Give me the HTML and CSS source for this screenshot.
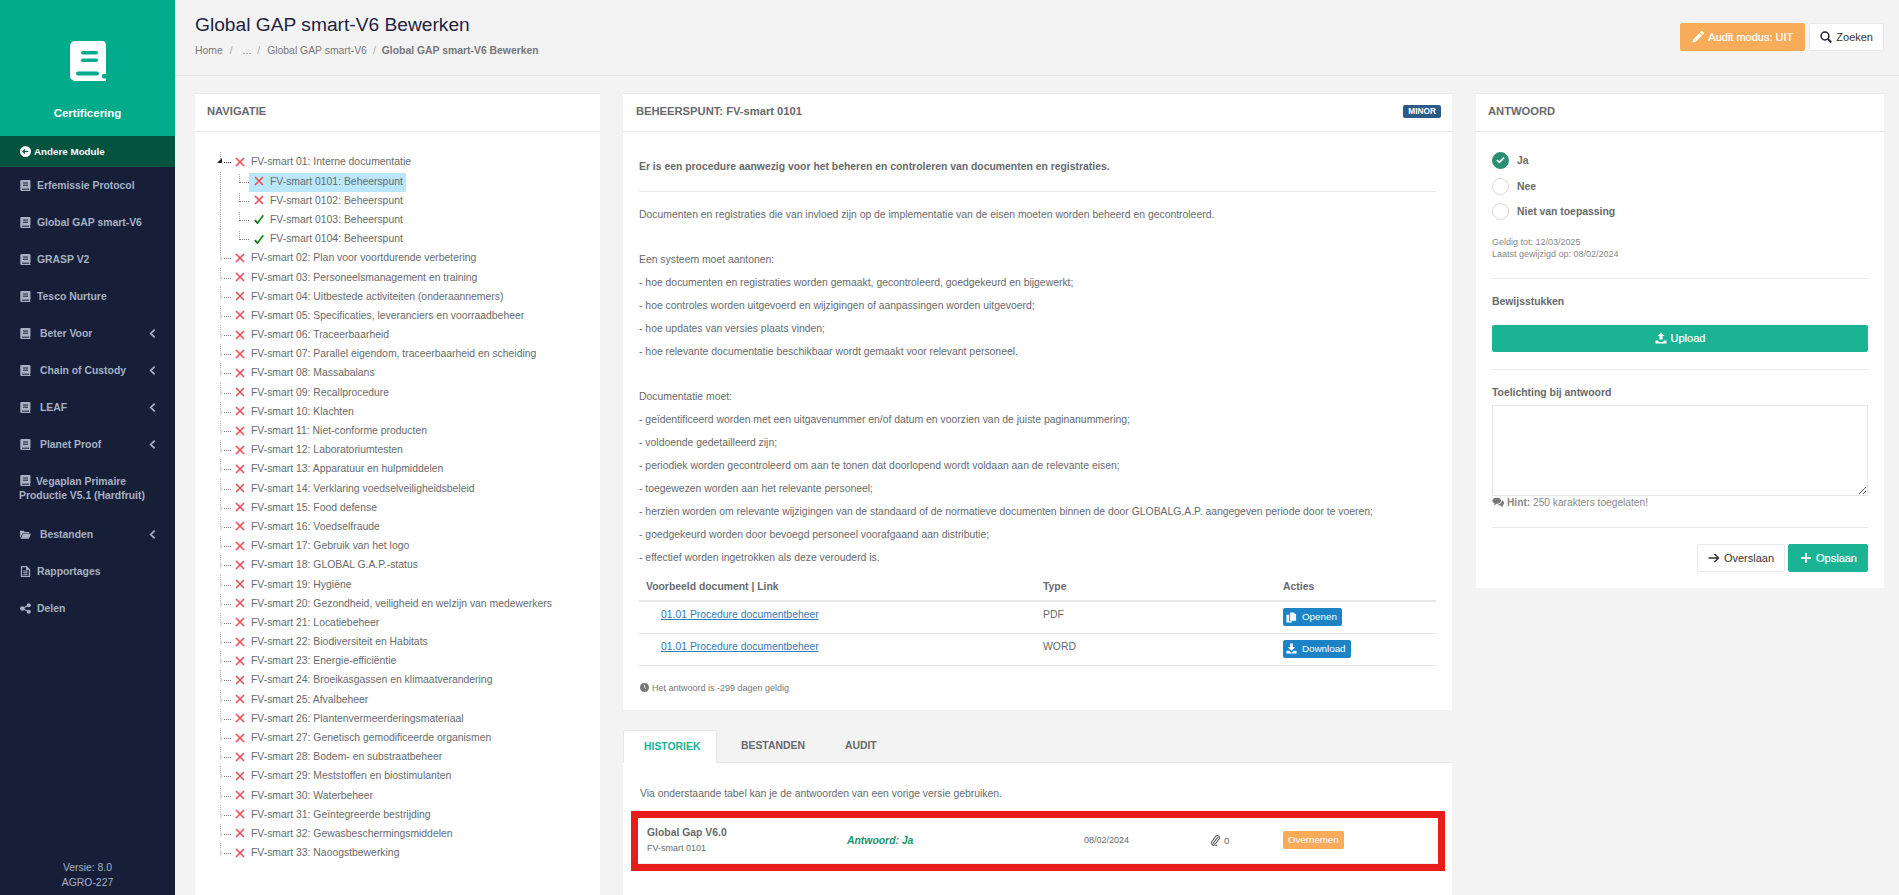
FILE: index.html
```html
<!DOCTYPE html>
<html lang="nl">
<head>
<meta charset="utf-8">
<title>Global GAP smart-V6 Bewerken</title>
<link rel="stylesheet" href="styles.css">
</head>
<body>
<svg class="defs" width="0" height="0">
<symbol id="book" viewBox="0 0 11 11"><path d="M1.500 0h8a1 1 0 0 1 1 1v7.800h-.6v1.200h.6v1H1.500A1.200 1.200 0 0 1 .3 9.800V1.200A1.200 1.200 0 0 1 1.500 0z" fill="currentColor"/><path d="M3 3h5M3 5.200h5M2 9.200h7" stroke="#161e38" stroke-width="1" fill="none"/></symbol>
<symbol id="x" viewBox="0 0 10 10"><path d="M1 1l8 8M9 1l-8 8" stroke="#ee4b57" stroke-width="1.600" fill="none"/></symbol>
<symbol id="v" viewBox="0 0 10 10"><path d="M1 6l2.600 3L9.300 1.200" stroke="#0a8a12" stroke-width="1.600" fill="none"/><path d="M.7 6.600l2.600 3" stroke="#222" stroke-width=".8" fill="none"/></symbol>
<symbol id="chev" viewBox="0 0 8 12"><path d="M6.500 1.500L2 6l4.500 4.500" stroke="currentColor" stroke-width="2" fill="none"/></symbol>
</svg>
<div class="app">
<aside class="side">
<div class="brand">
<svg class="logo" viewBox="0 0 36 40"><path d="M5 0h27a4 4 0 0 1 4 4v29h-2a2 2 0 0 0 0 4.500h2V40H5a5 5 0 0 1-5-5V5a5 5 0 0 1 5-5z" fill="#fff"/><rect x="11" y="10" width="17" height="3.500" rx="1.700" fill="#00ab8c"/><rect x="11" y="17.500" width="17" height="3.500" rx="1.700" fill="#00ab8c"/><rect x="6" y="30.500" width="23" height="4" rx="2" fill="#00ab8c"/></svg>
<div class="brand-name">Certificering</div>
</div>
<a class="other"><svg class="other-ic" viewBox="0 0 12 12"><circle cx="6" cy="6" r="6" fill="#fff"/><path d="M9 6H3.500M5.500 3.800L3.300 6l2.200 2.200" stroke="#02543f" stroke-width="1.300" fill="none"/></svg>Andere Module</a>
<nav class="menu">
<a class="mi"><svg class="mic"><use href="#book"/></svg>Erfemissie Protocol</a>
<a class="mi"><svg class="mic"><use href="#book"/></svg>Global GAP smart-V6</a>
<a class="mi"><svg class="mic"><use href="#book"/></svg>GRASP V2</a>
<a class="mi"><svg class="mic"><use href="#book"/></svg>Tesco Nurture</a>
<a class="mi sub"><svg class="mic"><use href="#book"/></svg>Beter Voor<svg class="chev"><use href="#chev"/></svg></a>
<a class="mi sub"><svg class="mic"><use href="#book"/></svg>Chain of Custody<svg class="chev"><use href="#chev"/></svg></a>
<a class="mi sub"><svg class="mic"><use href="#book"/></svg>LEAF<svg class="chev"><use href="#chev"/></svg></a>
<a class="mi sub"><svg class="mic"><use href="#book"/></svg>Planet Proof<svg class="chev"><use href="#chev"/></svg></a>
<a class="mi two"><span><svg class="mic"><use href="#book"/></svg>Vegaplan Primaire<br>Productie V5.1 (Hardfruit)</span></a>
<a class="mi sub"><svg class="mic" viewBox="0 0 12 11"><path d="M0 9.500V1.500h4l1.200 1.300H10v1.200H2.800L0 9.500zM3.300 4.800H12L9.700 10H.8z" fill="currentColor"/></svg>Bestanden<svg class="chev"><use href="#chev"/></svg></a>
<a class="mi"><svg class="mic" viewBox="0 0 11 11"><path d="M1.500.700h5l3 3v6.600h-8z" fill="none" stroke="currentColor" stroke-width="1.300"/><path d="M3.300 5h4.400M3.300 6.700h4.400M3.300 8.400h4.400" stroke="currentColor"/><path d="M6 .700v3.200h3.500z" fill="currentColor"/></svg>Rapportages</a>
<a class="mi"><svg class="mic" viewBox="0 0 11 11"><circle cx="8.800" cy="2.200" r="2" fill="currentColor"/><circle cx="8.800" cy="8.800" r="2" fill="currentColor"/><circle cx="2.300" cy="5.500" r="2.200" fill="currentColor"/><path d="M8.800 2.200L2.300 5.500l6.500 3.300" stroke="currentColor" stroke-width="1.100" fill="none"/></svg>Delen</a>
</nav>
<div class="version">Versie: 8.0<br>AGRO-227</div>
</aside>
<div class="main">
<header class="top">
<div>
<h1>Global GAP smart-V6 Bewerken</h1>
<div class="crumbs"><span>Home</span><i>/</i><span>...</span><i>/</i><span>Global GAP smart-V6</span><i>/</i><b>Global GAP smart-V6 Bewerken</b></div>
</div>
<div class="top-btns">
<button class="btn audit"><svg class="bic" viewBox="0 0 12 12"><path d="M.500 11.500l.8-3.300 6-6 2.500 2.500-6 6zM8 1.500L9.200.300a1 1 0 0 1 1.400 0l1.100 1.100a1 1 0 0 1 0 1.400L10.500 4z" fill="#fff"/></svg>Audit modus: UIT</button>
<button class="btn plain"><svg class="bic" viewBox="0 0 12 12"><circle cx="5" cy="5" r="3.900" fill="none" stroke="#1c2233" stroke-width="1.500"/><path d="M8 8l3.300 3.300" stroke="#1c2233" stroke-width="1.800"/></svg>Zoeken</button>
</div>
</header>
<div class="cols">
<section class="card nav">
<div class="card-h">NAVIGATIE</div>
<ul class="tree">
<li class="open"><svg class="st"><use href="#x"/></svg>FV-smart 01: Interne documentatie</li>
<li class="kid sel"><span class="hl"><svg class="st"><use href="#x"/></svg>FV-smart 0101: Beheerspunt</span></li>
<li class="kid"><span class="hl"><svg class="st"><use href="#x"/></svg>FV-smart 0102: Beheerspunt</span></li>
<li class="kid"><span class="hl"><svg class="st"><use href="#v"/></svg>FV-smart 0103: Beheerspunt</span></li>
<li class="kid"><span class="hl"><svg class="st"><use href="#v"/></svg>FV-smart 0104: Beheerspunt</span></li>
<li><svg class="st"><use href="#x"/></svg>FV-smart 02: Plan voor voortdurende verbetering</li>
<li><svg class="st"><use href="#x"/></svg>FV-smart 03: Personeelsmanagement en training</li>
<li><svg class="st"><use href="#x"/></svg>FV-smart 04: Uitbestede activiteiten (onderaannemers)</li>
<li><svg class="st"><use href="#x"/></svg>FV-smart 05: Specificaties, leveranciers en voorraadbeheer</li>
<li><svg class="st"><use href="#x"/></svg>FV-smart 06: Traceerbaarheid</li>
<li><svg class="st"><use href="#x"/></svg>FV-smart 07: Parallel eigendom, traceerbaarheid en scheiding</li>
<li><svg class="st"><use href="#x"/></svg>FV-smart 08: Massabalans</li>
<li><svg class="st"><use href="#x"/></svg>FV-smart 09: Recallprocedure</li>
<li><svg class="st"><use href="#x"/></svg>FV-smart 10: Klachten</li>
<li><svg class="st"><use href="#x"/></svg>FV-smart 11: Niet-conforme producten</li>
<li><svg class="st"><use href="#x"/></svg>FV-smart 12: Laboratoriumtesten</li>
<li><svg class="st"><use href="#x"/></svg>FV-smart 13: Apparatuur en hulpmiddelen</li>
<li><svg class="st"><use href="#x"/></svg>FV-smart 14: Verklaring voedselveiligheidsbeleid</li>
<li><svg class="st"><use href="#x"/></svg>FV-smart 15: Food defense</li>
<li><svg class="st"><use href="#x"/></svg>FV-smart 16: Voedselfraude</li>
<li><svg class="st"><use href="#x"/></svg>FV-smart 17: Gebruik van het logo</li>
<li><svg class="st"><use href="#x"/></svg>FV-smart 18: GLOBAL G.A.P.-status</li>
<li><svg class="st"><use href="#x"/></svg>FV-smart 19: Hygiëne</li>
<li><svg class="st"><use href="#x"/></svg>FV-smart 20: Gezondheid, veiligheid en welzijn van medewerkers</li>
<li><svg class="st"><use href="#x"/></svg>FV-smart 21: Locatiebeheer</li>
<li><svg class="st"><use href="#x"/></svg>FV-smart 22: Biodiversiteit en Habitats</li>
<li><svg class="st"><use href="#x"/></svg>FV-smart 23: Energie-efficiëntie</li>
<li><svg class="st"><use href="#x"/></svg>FV-smart 24: Broeikasgassen en klimaatverandering</li>
<li><svg class="st"><use href="#x"/></svg>FV-smart 25: Afvalbeheer</li>
<li><svg class="st"><use href="#x"/></svg>FV-smart 26: Plantenvermeerderingsmateriaal</li>
<li><svg class="st"><use href="#x"/></svg>FV-smart 27: Genetisch gemodificeerde organismen</li>
<li><svg class="st"><use href="#x"/></svg>FV-smart 28: Bodem- en substraatbeheer</li>
<li><svg class="st"><use href="#x"/></svg>FV-smart 29: Meststoffen en biostimulanten</li>
<li><svg class="st"><use href="#x"/></svg>FV-smart 30: Waterbeheer</li>
<li><svg class="st"><use href="#x"/></svg>FV-smart 31: Geïntegreerde bestrijding</li>
<li><svg class="st"><use href="#x"/></svg>FV-smart 32: Gewasbeschermingsmiddelen</li>
<li><svg class="st"><use href="#x"/></svg>FV-smart 33: Naoogstbewerking</li>
</ul>
</section>
<div class="mid">
<section class="card point">
<div class="card-h between"><span>BEHEERSPUNT: FV-smart 0101</span><span class="minor">MINOR</span></div>
<div class="point-b">
<p class="lead">Er is een procedure aanwezig voor het beheren en controleren van documenten en registraties.</p>
<hr>
<p>Documenten en registraties die van invloed zijn op de implementatie van de eisen moeten worden beheerd en gecontroleerd.</p>
<p class="gap">Een systeem moet aantonen:</p>
<p>- hoe documenten en registraties worden gemaakt, gecontroleerd, goedgekeurd en bijgewerkt;</p>
<p>- hoe controles worden uitgevoerd en wijzigingen of aanpassingen worden uitgevoerd;</p>
<p>- hoe updates van versies plaats vinden;</p>
<p>- hoe relevante documentatie beschikbaar wordt gemaakt voor relevant personeel.</p>
<p class="gap">Documentatie moet:</p>
<p>- geïdentificeerd worden met een uitgavenummer en/of datum en voorzien van de juiste paginanummering;</p>
<p>- voldoende gedetailleerd zijn;</p>
<p>- periodiek worden gecontroleerd om aan te tonen dat doorlopend wordt voldaan aan de relevante eisen;</p>
<p>- toegewezen worden aan het relevante personeel;</p>
<p>- herzien worden om relevante wijzigingen van de standaard of de normatieve documenten binnen de door GLOBALG.A.P. aangegeven periode door te voeren;</p>
<p>- goedgekeurd worden door bevoegd personeel voorafgaand aan distributie;</p>
<p>- effectief worden ingetrokken als deze verouderd is.</p>
<table class="docs">
<thead><tr><th>Voorbeeld document | Link</th><th>Type</th><th>Acties</th></tr></thead>
<tbody>
<tr><td><a class="lnk">01.01 Procedure documentbeheer</a></td><td>PDF</td><td><span class="blue"><svg class="sic" viewBox="0 0 12 12"><path d="M.500 3h3v7h3v1.500h-6zM4.500 .500h4l2.500 2.500v6.500h-6.500z" fill="#fff"/></svg>Openen</span></td></tr>
<tr><td><a class="lnk">01.01 Procedure documentbeheer</a></td><td>WORD</td><td><span class="blue"><svg class="sic" viewBox="0 0 12 12"><path d="M4.500 .500h3v4H10L6 8.500 2 4.500h2.500zM.500 8.500h3L6 10.500l2.500-2h3v3h-11z" fill="#fff"/></svg>Download</span></td></tr>
</tbody>
</table>
<div class="valid"><svg class="clock" viewBox="0 0 12 12"><circle cx="6" cy="6" r="6" fill="#777"/><path d="M6 2.500V6l2 1.500" stroke="#fff" fill="none"/></svg>Het antwoord is -299 dagen geldig</div>
</div>
</section>
<div class="tabs"><span class="tab on">HISTORIEK</span><span class="tab t2">BESTANDEN</span><span class="tab">AUDIT</span></div>
<section class="tabpane">
<p class="via">Via onderstaande tabel kan je de antwoorden van een vorige versie gebruiken.</p>
<div class="redbox">
<div class="hrow">
<div class="h1"><b>Global Gap V6.0</b><small>FV-smart 0101</small></div>
<div class="h2">Antwoord: Ja</div>
<div class="h3">08/02/2024</div>
<div class="h4"><svg class="clip" viewBox="0 0 12 14"><path d="M9.500 3.500L4.500 10a1.300 1.300 0 0 0 2 1.600L11 5.500A2.600 2.600 0 0 0 7 2.300L2.500 8.500a3.800 3.800 0 0 0 6 4.500" fill="none" stroke="#666" stroke-width="1.400"/></svg>0</div>
<div class="h5"><span class="take">Overnemen</span></div>
</div>
</div>
</section>
</div>
<section class="card answer">
<div class="card-h">ANTWOORD</div>
<div class="ans-b">
<div class="radio"><span class="dot on"><svg viewBox="0 0 10 8"><path d="M1 4l2.700 2.700L9 1.300" stroke="#fff" stroke-width="1.800" fill="none"/></svg></span>Ja</div>
<div class="radio"><span class="dot"></span>Nee</div>
<div class="radio"><span class="dot"></span>Niet van toepassing</div>
<div class="dates">Geldig tot: 12/03/2025<br>Laatst gewijzigd op: 08/02/2024</div>
<hr>
<div class="lab">Bewijsstukken</div>
<button class="upload"><svg class="bic" viewBox="0 0 12 12"><path d="M4.500 7.500V4H2.500L6 .500 9.500 4h-2v3.500zM.500 8.500h2.500c0 2 6 2 6 0h2.500v3h-11z" fill="#fff"/></svg>Upload</button>
<hr class="after-up">
<div class="lab">Toelichting bij antwoord</div>
<textarea class="ta"></textarea>
<div class="hint"><svg class="hint-ic" viewBox="0 0 14 12"><path d="M5.500 .500c3 0 5 1.500 5 3.500s-2 3.500-5 3.500l-3 2 .5-2.500C1.500 6.500.5 5.500.5 4c0-2 2-3.500 5-3.500z" fill="#777"/><path d="M11.500 3.500c1.500.5 2.500 1.700 2.500 3 0 1-.5 2-1.500 2.500l.5 2.500-3-2c-1.500 0-3-.5-3.500-1 3 0 5-2 5-5z" fill="#777"/></svg><b>Hint:</b> 250 karakters toegelaten!</div>
<hr class="last">
<div class="actions">
<button class="btn plain"><svg class="bic" viewBox="0 0 12 12"><path d="M.500 6h10M6.500 2l4 4-4 4" stroke="#333" stroke-width="1.500" fill="none"/></svg>Overslaan</button>
<button class="btn save"><svg class="bic" viewBox="0 0 12 12"><path d="M6 1v10M1 6h10" stroke="#fff" stroke-width="2" fill="none"/></svg>Opslaan</button>
</div>
</div>
</section>
</div>
</div>
</div>
</body>
</html>
```
FILE: styles.css
```css
* { box-sizing: border-box; }
html, body { margin: 0; height: 100%; }
body { font-family: "Liberation Sans", Arial, sans-serif; font-size: 10.400px; color: #676a6c; background: #f3f3f4; overflow: hidden; }
.defs { position: absolute; }
.app { display: flex; height: 895px; }
.side { width: 175px; flex: none; background: #161e38; display: flex; flex-direction: column; color: #a7b1c2; }
.brand { height: 136px; flex: none; background: #00ab8c; display: flex; flex-direction: column; align-items: center; padding-top: 41px; }
.logo { width: 36px; height: 40px; }
.brand-name { margin-top: 25px; color: #fff; font-weight: 700; font-size: 11.500px; line-height: 14px; }
.other { height: 30.500px; flex: none; background: #02543f; color: #fff; display: flex; align-items: center; padding-left: 20px; font-weight: 700; font-size: 9.800px; }
.other-ic { width: 11px; height: 11px; margin-right: 3px; }
.menu { display: flex; flex-direction: column; }
.mi { height: 37px; display: flex; align-items: center; padding-left: 20px; font-weight: 700; color: #a7b1c2; position: relative; flex: none; }
.mic { width: 11px; height: 11px; margin-right: 6px; flex: none; }
.sub .mic { margin-right: 9px; }
.chev { width: 7px; height: 11px; position: absolute; left: 149px; top: 13px; }
.mi.two { height: 53px; padding-left: 19px; line-height: 14px; }
.mi.two .mic { vertical-align: -1px; margin-left: 1px; margin-right: 5px; }
.version { margin-top: auto; text-align: center; line-height: 14.500px; padding-bottom: 5px; color: #a7b1c2; }
.main { flex: 1; min-width: 0; display: flex; flex-direction: column; }
.top { height: 76px; flex: none; border-bottom: 1px solid #e7e7e7; display: flex; justify-content: space-between; padding: 13px 15px 0 20px; }
h1 { margin: 0; font-weight: 400; font-size: 19.200px; line-height: 24px; color: #1f2340; }
.crumbs { margin-top: 7px; line-height: 14px; color: #777; }
.crumbs i { font-style: normal; margin: 0 6px; color: #aaa; }
.crumbs i:first-of-type { margin: 0 10px 0 7px; }
.crumbs span:nth-of-type(3) { margin-left: 1px; }
.crumbs b { font-weight: 700; }
.top-btns { display: flex; gap: 4px; padding-top: 10px; align-items: flex-start; }
.btn { height: 28px; border-radius: 2px; border: 1px solid #e7eaec; font: 400 11px "Liberation Sans", Arial, sans-serif; padding: 0 10px; display: inline-flex; align-items: center; background: #fff; color: #333; }
.btn .bic { margin-right: 4px; }
.bic { width: 12px; height: 12px; flex: none; }
.audit { background: #f8ac59; border-color: #f8ac59; color: #fff; -webkit-text-stroke: .2px #fff; padding: 0 11px; }
.save { background: #1ab394; border-color: #1ab394; color: #fff; -webkit-text-stroke: .2px #fff; padding: 0 10px 0 11px; }
.cols { display: flex; padding: 17px 15px 0 20px; flex: 1; min-height: 0; }
.card { background: #fff; border-top: 1px solid #e7eaec; }
.card-h { height: 38px; border-bottom: 1px solid #e7eaec; display: flex; align-items: center; padding: 0 0 3px 12px; font-weight: 700; font-size: 11.200px; color: #676a6c; }
.between { justify-content: space-between; padding-right: 11px; padding-left: 13px; }
.nav { width: 405px; flex: none; margin-right: 23px; }
.tree { list-style: none; margin: 20.400px 0 0; padding: 0 0 0 25px; line-height: 19.200px; }
.tree li { height: 19.200px; position: relative; white-space: nowrap; padding-left: 31px; background: repeating-linear-gradient(#aaa 0 1px, transparent 1px 2px) 0 0 / 1px 7px no-repeat; }
.tree li::before { content: ""; position: absolute; left: 4px; top: 10px; width: 7px; border-top: 1px dotted #777; }
.tree li::after { content: ""; position: absolute; left: 0; top: 6px; border-left: 3px solid #ddd; border-top: 4px solid transparent; border-bottom: 4px solid transparent; }
.tree li.open::before { border-color: #333; }
.tree li.open::after { left: -3px; top: 6px; border: 0; border-left: 5px solid transparent; border-bottom: 5px solid #222; }
.tree li.kid { padding-left: 50px; background: repeating-linear-gradient(#aaa 0 1px, transparent 1px 2px) 0 0 / 1px 100% no-repeat, repeating-linear-gradient(#aaa 0 1px, transparent 1px 2px) 19px 2px / 1px 8px no-repeat; }
.tree li.kid::before { left: 19px; width: 10px; }
.tree li.kid::after { content: none; }
.st { width: 10px; height: 10px; margin: 0 6px 0 -16px; vertical-align: -1.500px; }
.hl { display: inline-block; height: 19px; line-height: 18.400px; padding: 0 3px 0 21px; margin-left: -21px; }
.sel .hl { background: #bbe7fb; }
.mid { width: 829px; flex: none; margin-right: 24px; display: flex; flex-direction: column; }
.minor { background: #2b5a86; color: #fff; font-size: 8.300px; font-weight: 700; border-radius: 2px; padding: 0 5px; line-height: 13px; height: 13px; }
.point-b { padding: 0 16px 16px; }
.point-b p { margin: 0; line-height: 23px; height: 23px; white-space: nowrap; }
.point-b p.lead { margin-top: 28px; font-weight: 700; line-height: 14px; height: 14px; }
.point-b hr { border: 0; border-top: 1px solid #e7eaec; margin: 17px 0 11px; }
.point-b p.gap { margin-top: 22px; }
.docs { width: 100%; border-collapse: collapse; margin-top: 3px; }
.docs th { text-align: left; font-weight: 700; height: 29px; vertical-align: middle; border-bottom: 2px solid #e7e7e7; padding: 0; }
.docs td { height: 32px; border-bottom: 1px solid #e7e7e7; padding: 6px 0 0; vertical-align: top; line-height: 14px; }
.docs th:nth-child(1) { padding-left: 7px; }
.docs th:nth-child(1), .docs td:nth-child(1) { width: 404px; }
.docs th:nth-child(2), .docs td:nth-child(2) { width: 240px; }
.lnk { color: #337ab7; text-decoration: underline; margin-left: 22px; }
.blue { display: inline-flex; align-items: center; height: 18px; background: #1c84c6; border-radius: 2px; color: #fff; padding: 0 5px 0 3px; font-size: 9.800px; vertical-align: top; }
.sic { width: 11px; height: 11px; margin-right: 5px; }
.valid { display: flex; align-items: center; margin-top: 16px; font-size: 9px; line-height: 12px; color: #777; }
.clock { width: 9px; height: 9px; margin-right: 3px; margin-left: 1px; }
.tabs { display: flex; flex: none; margin-top: 20px; height: 33px; border-bottom: 1px solid #e7e7e7; font-weight: 700; }
.tab { padding: 0 20px; display: flex; align-items: center; height: 32px; }
.tab.on { background: #fff; color: #1ab394; border: 1px solid #e7e7e7; border-bottom: 0; border-radius: 2px 2px 0 0; height: 33px; padding: 0 16px 0 20px; width: 94px; }
.tab.t2 { padding-left: 24px; }
.tabpane { background: #fff; flex: 1; min-height: 0; padding-top: 1px; }
.via { margin: 23px 0 0 17px; line-height: 14px; }
.redbox { margin: 10px 0 0 8px; border: 7px solid #e91c1c; height: 60px; width: 814px; }
.hrow { display: flex; height: 46px; align-items: center; border-bottom: 1px solid #eee; }
.h1 { width: 209px; padding-left: 9px; }
.h1 b { display: block; line-height: 14px; }
.h1 small { display: block; font-size: 9px; line-height: 14px; margin-top: 1px; }
.h2 { width: 237px; font-weight: 700; font-style: italic; color: #1a9270; }
.h3 { width: 126px; font-size: 9px; }
.h4 { width: 73px; display: flex; align-items: center; font-size: 9.500px; }
.clip { width: 10px; height: 12px; margin-right: 4px; }
.take { background: #f8ac59; color: #fff; border-radius: 2px; display: inline-block; height: 18px; line-height: 18px; padding: 0 5px; font-size: 9.700px; }
.answer { width: 408px; height: 495px; flex: none; }
.ans-b { padding: 19.500px 16px 0; }
.radio { display: flex; align-items: center; height: 25.800px; font-weight: 700; padding-bottom: 8px; }
.dot { width: 17px; height: 17px; border-radius: 50%; border: 1px solid #ddd8cf; margin-right: 8px; display: flex; align-items: center; justify-content: center; flex: none; }
.dot.on { background: #2a8f77; border-color: #2a8f77; }
.dot svg { width: 9px; height: 8px; }
.dates { margin-top: 7px; font-size: 9px; line-height: 12.500px; color: #888; }
.ans-b hr { border: 0; border-top: 1px solid #e7eaec; margin: 17px 0 0; }
.lab { font-weight: 700; line-height: 14px; margin-top: 16px; }
.upload { display: flex; width: 100%; height: 27px; margin-top: 16px; background: #1ab394; border: 0; border-radius: 2px; color: #fff; align-items: center; justify-content: center; font: 400 11px "Liberation Sans", Arial, sans-serif; -webkit-text-stroke: .2px #fff; }
.upload .bic { margin-right: 4px; }
.ans-b hr.after-up { margin-top: 17px; }
.ta { display: block; width: 100%; height: 91px; margin-top: 5px; border: 1px solid #e5e6e7; background: #fff; border-radius: 0; }
.hint { font-size: 10.200px; color: #888; line-height: 14px; }
.hint-ic { width: 12px; height: 11px; margin-right: 3px; vertical-align: -2px; }
.ans-b hr.last { margin-top: 17px; }
.actions { display: flex; justify-content: flex-end; gap: 3px; margin-top: 16px; }
```
